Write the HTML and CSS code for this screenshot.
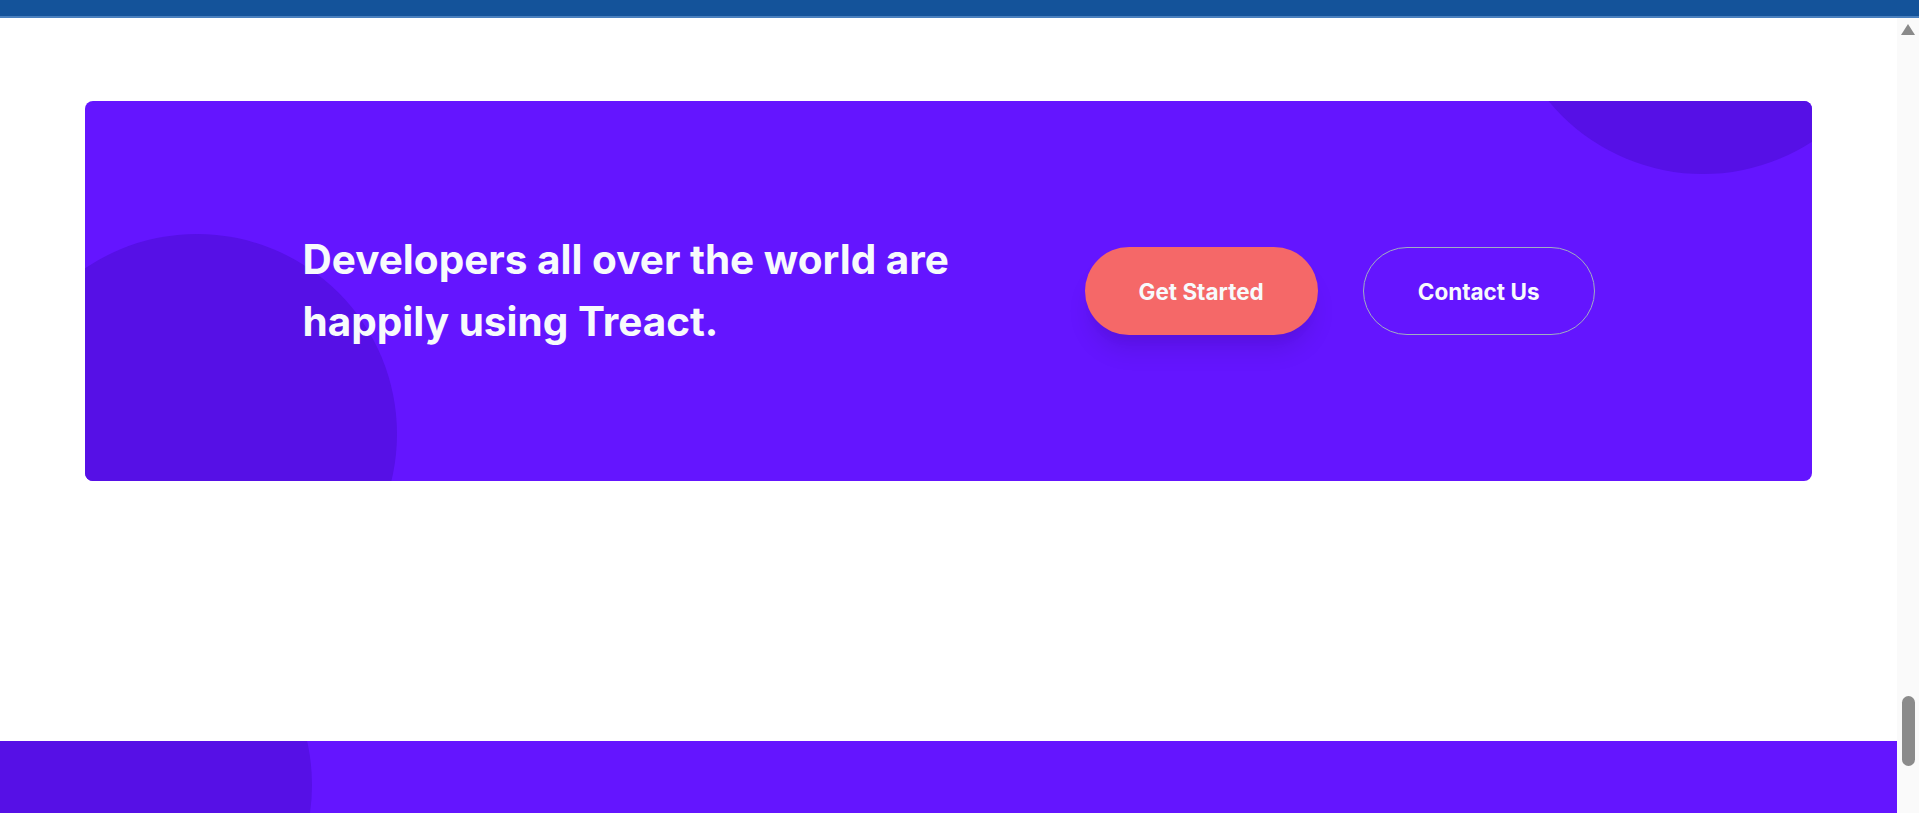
FILE: index.html
```html
<!DOCTYPE html>
<html lang="en">
<head>
<meta charset="utf-8">
<title>Treact – Get Started</title>
<link rel="stylesheet" href="styles.css">
</head>
<body>
<div class="topbar"></div>
<div class="viewport">
  <main class="page">
    <section class="cta">
      <div class="card">
        <span class="blob blob-left"></span>
        <span class="blob blob-right"></span>
        <div class="row">
          <div class="text-col">
            <h2 class="headline">Developers all over the world are happily using Treact.</h2>
          </div>
          <div class="btn-col">
            <a class="btn btn-primary" href="#">Get Started</a>
            <a class="btn btn-secondary" href="#">Contact Us</a>
          </div>
        </div>
      </div>
    </section>
    <footer class="footer">
      <span class="blob blob-foot"></span>
    </footer>
  </main>
  <aside class="scrollbar">
    <span class="scroll-arrow"></span>
    <span class="scroll-thumb"></span>
  </aside>
</div>
</body>
</html>
```

FILE: styles.css
```css
html, body {
  margin: 0;
  height: 100%;
  overflow: hidden;
}

body {
  font-family: Inter, "Noto Sans", "Liberation Sans", sans-serif;
  background: #ffffff;
}

.topbar {
  height: 16px;
  background: #14539a;
  border-bottom: 2px solid #4a80be;
}

.viewport {
  display: flex;
  height: 795px;
}

.page {
  flex: 1;
  display: flex;
  flex-direction: column;
  overflow: hidden;
  min-width: 0;
}

.cta {
  padding: 83px 85px 0;
}

.card {
  position: relative;
  height: 380px;
  background: #6415ff;
  border-radius: 8px;
  overflow: hidden;
  display: flex;
  align-items: center;
  justify-content: center;
}

.blob {
  position: absolute;
  width: 400px;
  height: 400px;
  border-radius: 50%;
  background: #5610e6;
}

.blob-left {
  left: -88px;
  top: 133px;
}

.blob-right {
  right: -91px;
  top: -327px;
}

.row {
  position: relative;
  display: flex;
  align-items: center;
  width: 1292px;
}

.text-col {
  width: 680px;
  flex: none;
}

.headline {
  margin: 0;
  font-size: 40.5px;
  line-height: 62px;
  font-weight: 700;
  color: #f7fafc;
}

.btn-col {
  flex: 1;
  display: flex;
  justify-content: flex-end;
  gap: 45px;
}

.btn {
  box-sizing: border-box;
  height: 88px;
  padding: 0 54px;
  border-radius: 9999px;
  display: flex;
  align-items: center;
  font-size: 22.5px;
  font-weight: 700;
  color: #f7fafc;
  text-decoration: none;
  white-space: nowrap;
}

.btn-primary {
  background: #f56868;
  box-shadow: 0 20px 25px -5px rgba(0, 0, 0, 0.1), 0 10px 10px -5px rgba(0, 0, 0, 0.04);
}

.btn-secondary {
  border: 1px solid #a0aec0;
}

.footer {
  position: relative;
  margin-top: 260px;
  flex: 1;
  background: #6415ff;
  overflow: hidden;
}

.blob-foot {
  left: -88px;
  top: -156px;
}

.scrollbar {
  width: 22px;
  flex: none;
  background: #fafafa;
  display: flex;
  flex-direction: column;
  align-items: center;
}

.scroll-arrow {
  margin-top: 6px;
  width: 0;
  height: 0;
  border-left: 7.5px solid transparent;
  border-right: 7.5px solid transparent;
  border-bottom: 11px solid #8a8a8a;
}

.scroll-thumb {
  margin-top: 661px;
  width: 13px;
  height: 70px;
  border-radius: 7px;
  background: #8b8b8b;
}
```
